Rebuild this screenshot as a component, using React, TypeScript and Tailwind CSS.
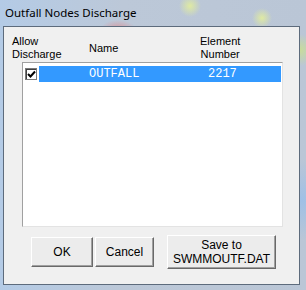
import React from "react";

function Check() {
  return (
    <svg width="9" height="9" viewBox="0 0 9 9">
      <path d="M1 4 L3.5 6.5 L8 1.5" stroke="#000" strokeWidth="2" fill="none" />
    </svg>
  );
}

function Btn({ children, w, h }: { children: React.ReactNode; w: string; h: string }) {
  return (
    <div
      className={`${w} ${h} flex flex-col items-center justify-center border border-t-[#ffffff] border-l-[#ffffff] border-r-[#696969] border-b-[#696969] bg-[#ececec] shadow-[inset_-1px_-1px_0_#a0a0a0] text-[12px] leading-[14px] text-black`}
    >
      {children}
    </div>
  );
}

export default function App() {
  return (
    <div
      className="w-[306px] h-[290px] overflow-hidden flex flex-col bg-[radial-gradient(ellipse_18px_10px_at_118px_30px,#d9949a,transparent),radial-gradient(circle_at_190px_6px,#dfeaa2_0,transparent_11px),radial-gradient(circle_at_262px_18px,#dfeaa2_0,transparent_10px),radial-gradient(circle_at_300px_50px,#c9dc9a_0,transparent_16px),radial-gradient(circle_at_302px_200px,#9fc0e6_0,transparent_40px),linear-gradient(90deg,#b4cbe6_0%,#bcc8d8_40%,#bac6d6_100%)]"
      style={{ fontFamily: '"Liberation Sans", Arial, sans-serif' }}
    >
      <div className="h-[26px] pl-[5px] pt-[5px] text-[11.5px] leading-[16px] text-black" style={{ fontFamily: '"Noto Sans", sans-serif' }}>
        Outfall Nodes Discharge
      </div>
      <div className="ml-[3px] w-[297px] h-[259px] border border-[#5d6b7c] bg-[#f0f0f0] flex flex-col">
        <div className="h-[35px] relative text-[11px] leading-[13px] text-black">
          <div className="absolute left-[8px] top-[8px]">
            Allow
            <br />
            Discharge
          </div>
          <div className="absolute left-[85px] top-[15px]">Name</div>
          <div className="absolute left-[196px] top-[8px] text-center">
            Element
            <br />
            Number
          </div>
        </div>
        <div className="ml-[18px] w-[261px] h-[165px] border border-t-[#a0a0a0] border-l-[#a0a0a0] border-r-[#e3e3e3] border-b-[#e3e3e3] bg-white pt-[3px] pr-[1px]">
          <div className="h-[16px] flex items-center">
            <div className="ml-[2px] w-[12px] h-[12px] border border-[#7a7a7a] bg-white flex items-center justify-center shadow-[inset_1px_1px_0_#404040]">
              <Check />
            </div>
            <div className="ml-[2px] flex-1 h-[16px] bg-[#3399ff] relative text-white text-[12px] leading-[16px]" style={{ fontFamily: '"Liberation Mono", "Courier New", monospace' }}>
              <span className="absolute left-[50px]">OUTFALL</span>
              <span className="absolute left-[169px]">2217</span>
            </div>
          </div>
        </div>
        <div className="mt-[8px] h-[34px] flex items-center">
          <div className="ml-[27px]">
            <Btn w="w-[62px]" h="h-[30px]">OK</Btn>
          </div>
          <div className="ml-[2px]">
            <Btn w="w-[59px]" h="h-[30px]">Cancel</Btn>
          </div>
          <div className="ml-[13px]">
            <Btn w="w-[109px]" h="h-[34px]">
              <span>Save to</span>
              <span>SWMMOUTF.DAT</span>
            </Btn>
          </div>
        </div>
      </div>
    </div>
  );
}
